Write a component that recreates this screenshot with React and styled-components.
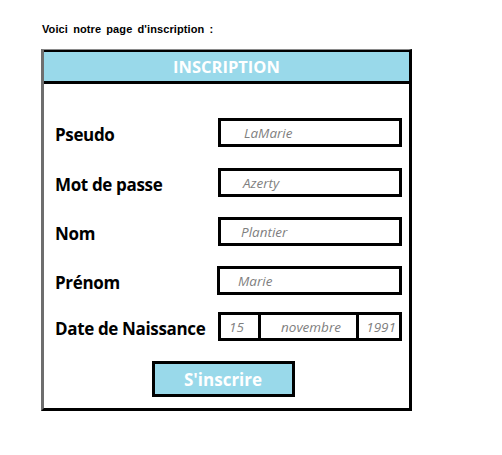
import React from 'react'
import styled, { createGlobalStyle } from 'styled-components'

const Global = createGlobalStyle`
  html, body { margin: 0; padding: 0; background: #fff; }
  body { font-family: "Liberation Sans", Arial, sans-serif; }
`

const Page = styled.div`
  padding: 22px 0 0 41px;
  width: 502px;
  height: 455px;
  box-sizing: border-box;
`

const Intro = styled.div`
  font-family: "Liberation Sans", Arial, sans-serif;
  font-weight: bold;
  font-size: 11px;
  word-spacing: 2px;
  letter-spacing: 0.1px;
  color: #000;
  height: 14px;
  line-height: 14px;
  padding-left: 1px;
  margin-bottom: 13px;
`

const Card = styled.div`
  width: 371px;
  box-sizing: border-box;
  border: 3px solid #000;
  border-left-color: #6e6e6e;
  border-top: 1px solid #8a8a8a;
  box-shadow: inset 0 2px 0 #000;
  padding-top: 2px;
  background: #fff;
`

const Header = styled.div`
  height: 29px;
  background: #99d9ea;
  border-bottom: 3px solid #000;
  color: #fff;
  font-family: "Open Sans", sans-serif;
  font-weight: bold;
  font-size: 16.5px;
  line-height: 29px;
  text-align: center;
`

const Body = styled.div`
  display: flex;
  flex-direction: column;
  padding: 34px 6px 11px 11px;
`

const Fields = styled.div`
  display: flex;
  flex-direction: column;
`

const Row = styled.div`
  display: grid;
  grid-template-columns: 163px 184px;
  align-items: center;
  height: 29px;
  margin-top: ${p => p.$gap || 0}px;
`

const Label = styled.div`
  font-family: "Open Sans", sans-serif;
  font-weight: 700;
  font-size: 17px;
  color: #000;
  white-space: nowrap;
  letter-spacing: -0.35px;
  padding-top: 3px;
`

const Input = styled.div`
  height: 29px;
  box-sizing: border-box;
  border: 3px solid #000;
  display: flex;
  align-items: center;
  padding-left: ${p => p.$indent || 23}px;
  font-family: "Open Sans", sans-serif;
  font-style: italic;
  font-size: 13.5px;
  color: #7f7f7f;
  margin-left: ${p => p.$shift || 0}px;
`

const DateBox = styled.div`
  height: 29px;
  box-sizing: border-box;
  border: 3px solid #000;
  display: grid;
  grid-template-columns: 37px 1fr 43px;
`

const DatePart = styled.div`
  display: flex;
  align-items: center;
  justify-content: ${p => p.$align || 'center'};
  padding: 0 3px 0 8px;
  border-left: ${p => (p.$first ? 'none' : '3px solid #000')};
  font-family: "Open Sans", sans-serif;
  font-style: italic;
  font-size: 13.5px;
  color: #7f7f7f;
`

const Submit = styled.button`
  align-self: center;
  margin: 20px 0 0 -12px;
  width: 143px;
  height: 36px;
  box-sizing: border-box;
  border: 3px solid #000;
  background: #99d9ea;
  color: #fff;
  font-family: "Open Sans", sans-serif;
  font-weight: bold;
  font-size: 17px;
  padding: 0;
  cursor: pointer;
`

const fields = [
  { label: 'Pseudo', value: 'LaMarie', indent: 23, gap: 0 },
  { label: 'Mot de passe', value: 'Azerty', indent: 22, gap: 21 },
  { label: 'Nom', value: 'Plantier', indent: 20, gap: 20 },
  { label: 'Prénom', value: 'Marie', indent: 18, shift: -1, gap: 20 },
]

export default function App() {
  return (
    <Page>
      <Global />
      <Intro>Voici notre page d'inscription :</Intro>
      <Card>
        <Header>INSCRIPTION</Header>
        <Body>
          <Fields>
            {fields.map(f => (
              <Row key={f.label} $gap={f.gap}>
                <Label>{f.label}</Label>
                <Input $indent={f.indent} $shift={f.shift}>{f.value}</Input>
              </Row>
            ))}
            <Row $gap={17}>
              <Label>Date de Naissance</Label>
              <DateBox>
                <DatePart $first $align="flex-start">15</DatePart>
                <DatePart>novembre</DatePart>
                <DatePart $align="flex-end">1991</DatePart>
              </DateBox>
            </Row>
          </Fields>
          <Submit>S'inscrire</Submit>
        </Body>
      </Card>
    </Page>
  )
}
